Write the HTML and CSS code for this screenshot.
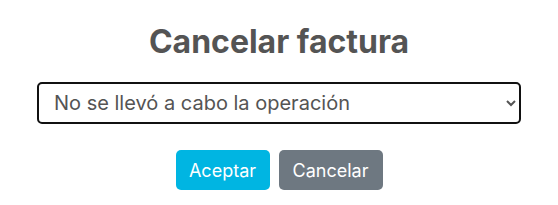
FILE: index.html
```html
<!DOCTYPE html>
<html lang="es">
<head>
    <meta charset="UTF-8">
    <meta name="viewport" content="width=device-width, initial-scale=1.0">
    <title>Cancelar factura</title>
    <link rel="stylesheet" href="styles.css">
</head>
<body>
    <div class="modal">
        <h2 class="modal-title">Cancelar factura</h2>

        <select class="modal-select">
            <option>No se llevó a cabo la operación</option>
            <option>Error en los datos del cliente</option>
            <option>Factura duplicada</option>
        </select>

        <div class="modal-actions">
            <button class="btn btn-confirm">Aceptar</button>
            <button class="btn btn-cancel">Cancelar</button>
        </div>
    </div>
</body>
</html>
```

FILE: styles.css
```css
body {
    margin: 0;
    background: #fff;
    font-family: Inter, 'Noto Sans', sans-serif;
}

.modal {
    display: flex;
    flex-direction: column;
    align-items: center;
    padding-top: 24px;
}

.modal-title {
    margin: 0;
    font-size: 32px;
    line-height: 36px;
    font-weight: 700;
    color: #545454;
}

.modal-select {
    margin-top: 22px;
    width: 484px;
    height: 42px;
    padding: 0 11px;
    border: 2px solid #111;
    border-radius: 5px;
    background: #fff;
    color: #545454;
    font-family: Inter, 'Noto Sans', sans-serif;
    font-size: 20px;
    outline: none;
}

.modal-actions {
    display: flex;
    gap: 9px;
    margin-top: 26px;
}

.btn {
    height: 40px;
    border: none;
    border-radius: 5px;
    color: #fff;
    font-family: Inter, 'Noto Sans', sans-serif;
    font-size: 18px;
    cursor: pointer;
}

.btn-confirm {
    width: 94px;
    background: #00b5e2;
}

.btn-cancel {
    width: 104px;
    background: #6e7881;
}
```
